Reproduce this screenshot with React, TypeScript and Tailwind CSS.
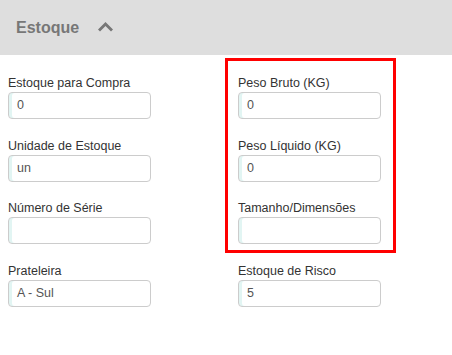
import React from "react";

interface FieldProps {
  label: string;
  value?: string;
}

const Field = ({ label, value = "" }: FieldProps) => {
  return (
    <div className="flex flex-col">
      <label className="text-[12.5px] leading-[17px] text-[#333]">{label}</label>
      <div className="h-[27px] w-[143px] rounded-[4px] border border-[#ccc] bg-white pl-2 text-[12.5px] leading-[24px] text-[#555] shadow-[inset_3px_0_0_#e2f5f3]">
        {value}
      </div>
    </div>
  );
};

const ChevronUp = () => (
  <svg width="15" height="11" viewBox="0 0 15 11" className="mt-[-3px]">
    <polygon points="0,8.5 7.5,1 15,8.5 13,10.5 7.5,5 2,10.5" fill="#777" />
  </svg>
);

export default function App() {
  return (
    <div className="h-[355px] w-[452px] overflow-hidden bg-white font-['Liberation_Sans',Arial,sans-serif]">
      {/* Header */}
      <div className="flex h-[55px] items-center bg-[#dedede] pl-4">
        <span className="text-[16px] font-bold text-[#777]">Estoque</span>
        <span className="ml-[19px] flex">
          <ChevronUp />
        </span>
      </div>

      {/* Fields */}
      <div className="flex pl-2 pt-5">
        <div className="flex w-[230px] flex-col gap-[18.5px]">
          <Field label="Estoque para Compra" value="0" />
          <Field label="Unidade de Estoque" value="un" />
          <Field label="Número de Série" />
          <Field label="Prateleira" value="A - Sul" />
        </div>

        <div className="flex flex-col gap-[18.5px]">
          <div className="relative flex flex-col gap-[18.5px]">
            <div className="pointer-events-none absolute -top-[17px] -left-[13px] -right-[15px] -bottom-[9px] border-[3px] border-[#ff0000]" />
            <Field label="Peso Bruto (KG)" value="0" />
            <Field label="Peso Líquido (KG)" value="0" />
            <Field label="Tamanho/Dimensões" />
          </div>
          <Field label="Estoque de Risco" value="5" />
        </div>
      </div>
    </div>
  );
}
